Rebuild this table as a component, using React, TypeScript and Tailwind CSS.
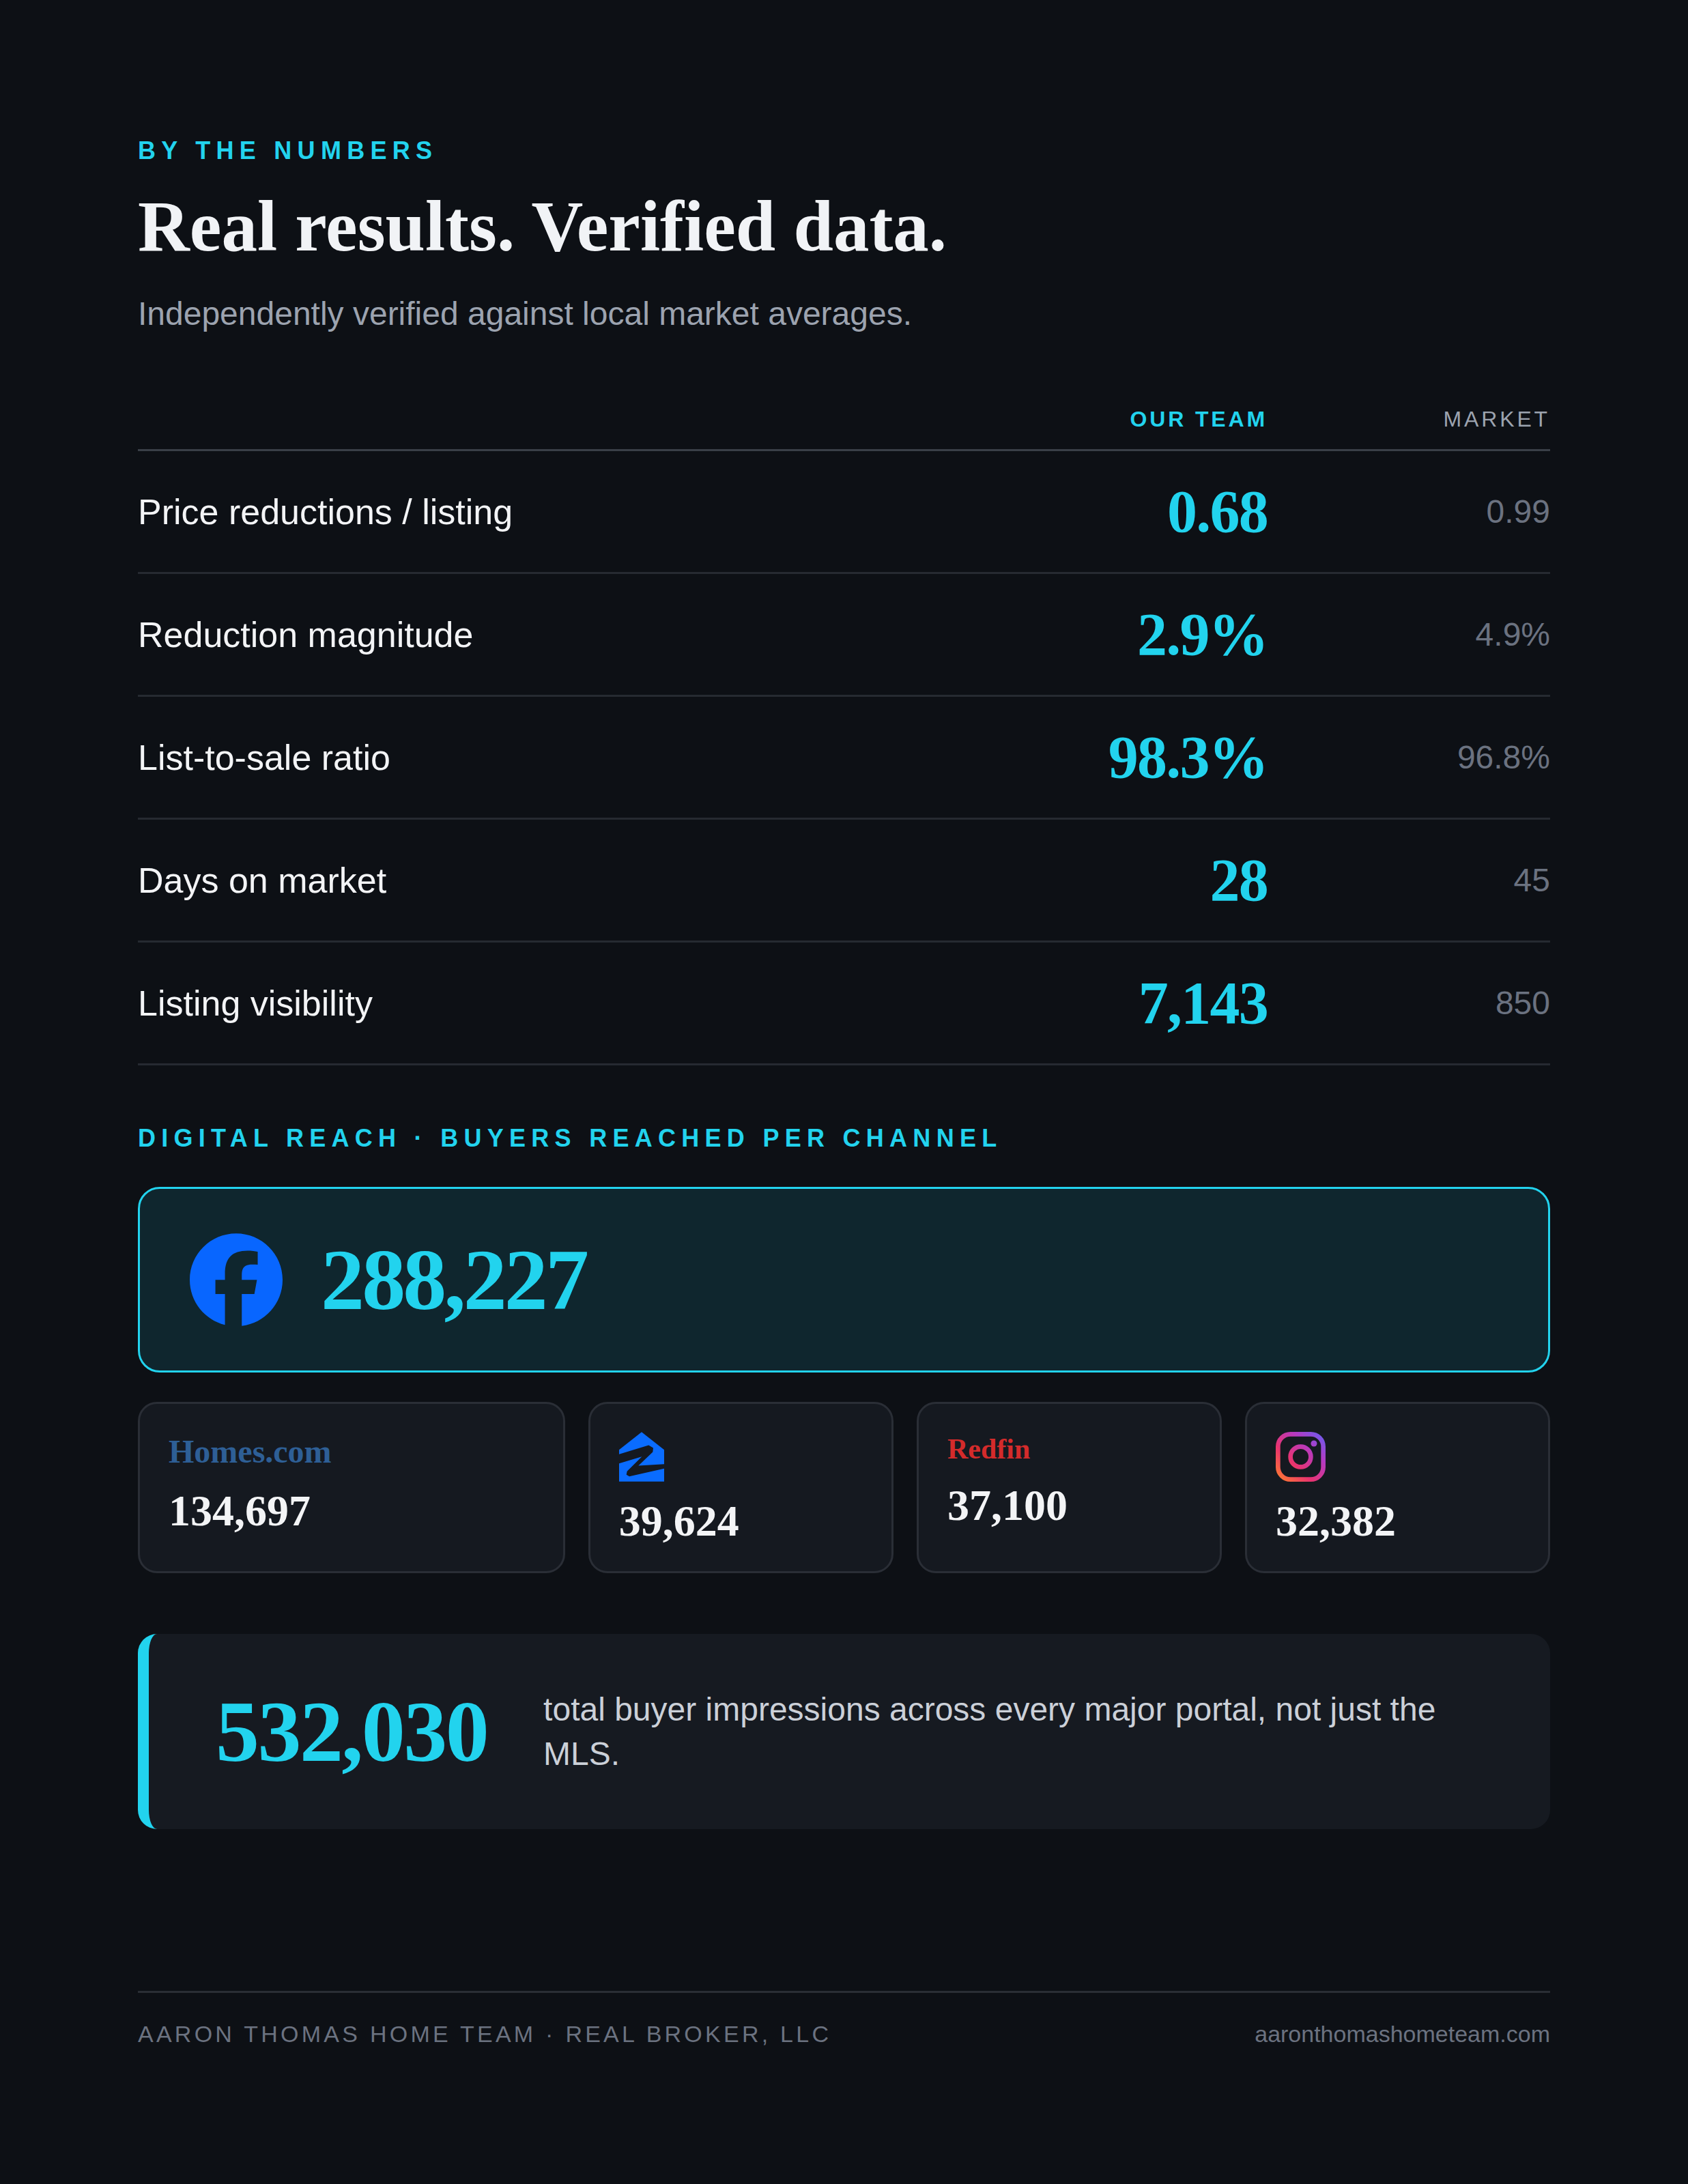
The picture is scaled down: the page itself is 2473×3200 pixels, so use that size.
import { SiFacebook } from "react-icons/si"

type Row = {
    label: string,
    ours: string,
    market: string,
}

const rows: Row[] = [
    { label: "Price reductions / listing", ours: "0.68", market: "0.99" },
    { label: "Reduction magnitude", ours: "2.9%", market: "4.9%" },
    { label: "List-to-sale ratio", ours: "98.3%", market: "96.8%" },
    { label: "Days on market", ours: "28", market: "45" },
    { label: "Listing visibility", ours: "7,143", market: "850" },
]

function ZillowIcon() {
    return (
        <svg width="66" height="73" viewBox="90 52 198 218">
            <polygon points="90,130 189,52 288,130 288,270 90,270" fill="#0a6cff" />
            <polygon
                points="90,150 220,110 240,122 238,140 175,200 288,193 288,213 135,247 122,240 125,225 190,160 90,190"
                fill="#151920"
            />
        </svg>
    )
}

function InstagramIcon() {
    return (
        <svg width="73" height="73" viewBox="0 0 24 24" fill="none">
            <defs>
                <linearGradient id="ig" gradientUnits="userSpaceOnUse" x1="1" y1="23" x2="23" y2="1">
                    <stop offset="0" stopColor="#ff7a2f" />
                    <stop offset="0.35" stopColor="#e8336f" />
                    <stop offset="0.7" stopColor="#b53ac2" />
                    <stop offset="1" stopColor="#6b5cf0" />
                </linearGradient>
            </defs>
            <rect x="1.1" y="1.1" width="21.8" height="21.8" rx="6" stroke="url(#ig)" strokeWidth="2.2" />
            <circle cx="12" cy="12" r="4.9" stroke="url(#ig)" strokeWidth="2.2" />
            <circle cx="18.4" cy="5.6" r="1.5" fill="url(#ig)" />
        </svg>
    )
}

type ChannelCardProps = {
    logo: React.ReactNode,
    value: string,
}

function ChannelCard({ logo, value }: ChannelCardProps) {
    return (
        <div className="flex flex-col rounded-[28px] border-[3px] border-[#2a2e36] bg-[#151920] px-[42px] py-[41px]">
            <div>{logo}</div>
            <p className="mt-[26px] font-['Liberation_Serif','Times_New_Roman',serif] text-[64px] font-bold leading-none text-[#f3f4f6]">{value}</p>
        </div>
    )
}

export default function App() {
    return (
        <div className="min-h-[3200px] w-full bg-[#0d1015] font-['Liberation_Sans',Arial,sans-serif]">
            <div className="px-[202px] pt-[203px] pb-[200px]">
                <p className="text-[36px] font-bold uppercase leading-none tracking-[0.23em] text-[#22d3ee]">By the numbers</p>
                <h1 className="mt-[40px] font-['Liberation_Serif','Times_New_Roman',serif] text-[105px] font-bold leading-none text-[#f1f3f6]">
                    Real results. Verified data.
                </h1>
                <p className="mt-[52px] text-[48px] leading-none text-[#9ca3af]">Independently verified against local market averages.</p>

                {/* comparison table */}
                <div className="mt-[114px]">
                    <div className="grid grid-cols-[1fr_300px_414px] border-b-[3px] border-[#3a3f47] pb-[28px] text-[32px] leading-none tracking-[0.12em]">
                        <span />
                        <span className="text-right font-bold text-[#22d3ee]">OUR TEAM</span>
                        <span className="text-right text-[#9ca3af]">MARKET</span>
                    </div>
                    {rows.map((row) => (
                        <div key={row.label} className="grid h-[180px] grid-cols-[1fr_300px_414px] items-center border-b-[3px] border-[#262a31]">
                            <span className="text-[52px] leading-none text-[#f3f4f6]">{row.label}</span>
                            <span className="text-right font-['Liberation_Serif','Times_New_Roman',serif] text-[88px] font-bold leading-none tracking-[-0.02em] text-[#22d3ee]">
                                {row.ours}
                            </span>
                            <span className="text-right text-[48px] leading-none text-[#6b7280]">{row.market}</span>
                        </div>
                    ))}
                </div>

                <p className="mt-[89px] text-[36px] font-bold uppercase leading-none tracking-[0.23em] text-[#22d3ee]">
                    Digital reach · Buyers reached per channel
                </p>

                <div className="mt-[53px] flex h-[272px] items-center gap-[56px] rounded-[32px] border-[3px] border-[#22d3ee] bg-[#0f262e] px-[73px]">
                    <SiFacebook size={136} color="#0866ff" />
                    <span className="font-['Liberation_Serif','Times_New_Roman',serif] text-[128px] font-bold leading-none tracking-[-0.03em] text-[#22d3ee]">288,227</span>
                </div>

                <div className="mt-[43px] grid grid-cols-[1.4fr_1fr_1fr_1fr] gap-[34px]">
                    <ChannelCard
                        logo={<span className="font-['Liberation_Serif','Times_New_Roman',serif] text-[48px] font-bold leading-[1.2] text-[#2e5f96]">Homes.com</span>}
                        value="134,697"
                    />
                    <ChannelCard logo={<ZillowIcon />} value="39,624" />
                    <ChannelCard
                        logo={<span className="font-['Liberation_Serif','Times_New_Roman',serif] text-[42px] font-bold leading-[1.2] text-[#d42b2b]">Redfin</span>}
                        value="37,100"
                    />
                    <ChannelCard logo={<InstagramIcon />} value="32,382" />
                </div>

                <div className="mt-[89px] flex h-[286px] items-center gap-[82px] rounded-[28px] border-l-[16px] border-[#22d3ee] bg-[#161a21] pl-[98px] pr-[100px]">
                    <span className="font-['Liberation_Serif','Times_New_Roman',serif] text-[128px] font-bold leading-none tracking-[-0.02em] text-[#22d3ee]">532,030</span>
                    <p className="flex-1 text-[48px] leading-[65px] text-[#cbd0d8]">
                        total buyer impressions across every major portal, not just the MLS.
                    </p>
                </div>

                <div className="mt-[237px] flex items-center justify-between border-t-[3px] border-[#2a2e35] pt-[43px] text-[34px] leading-none text-[#6b7280]">
                    <span className="tracking-[0.125em]">AARON THOMAS HOME TEAM · REAL BROKER, LLC</span>
                    <span>aaronthomashometeam.com</span>
                </div>
            </div>
        </div>
    )
}
